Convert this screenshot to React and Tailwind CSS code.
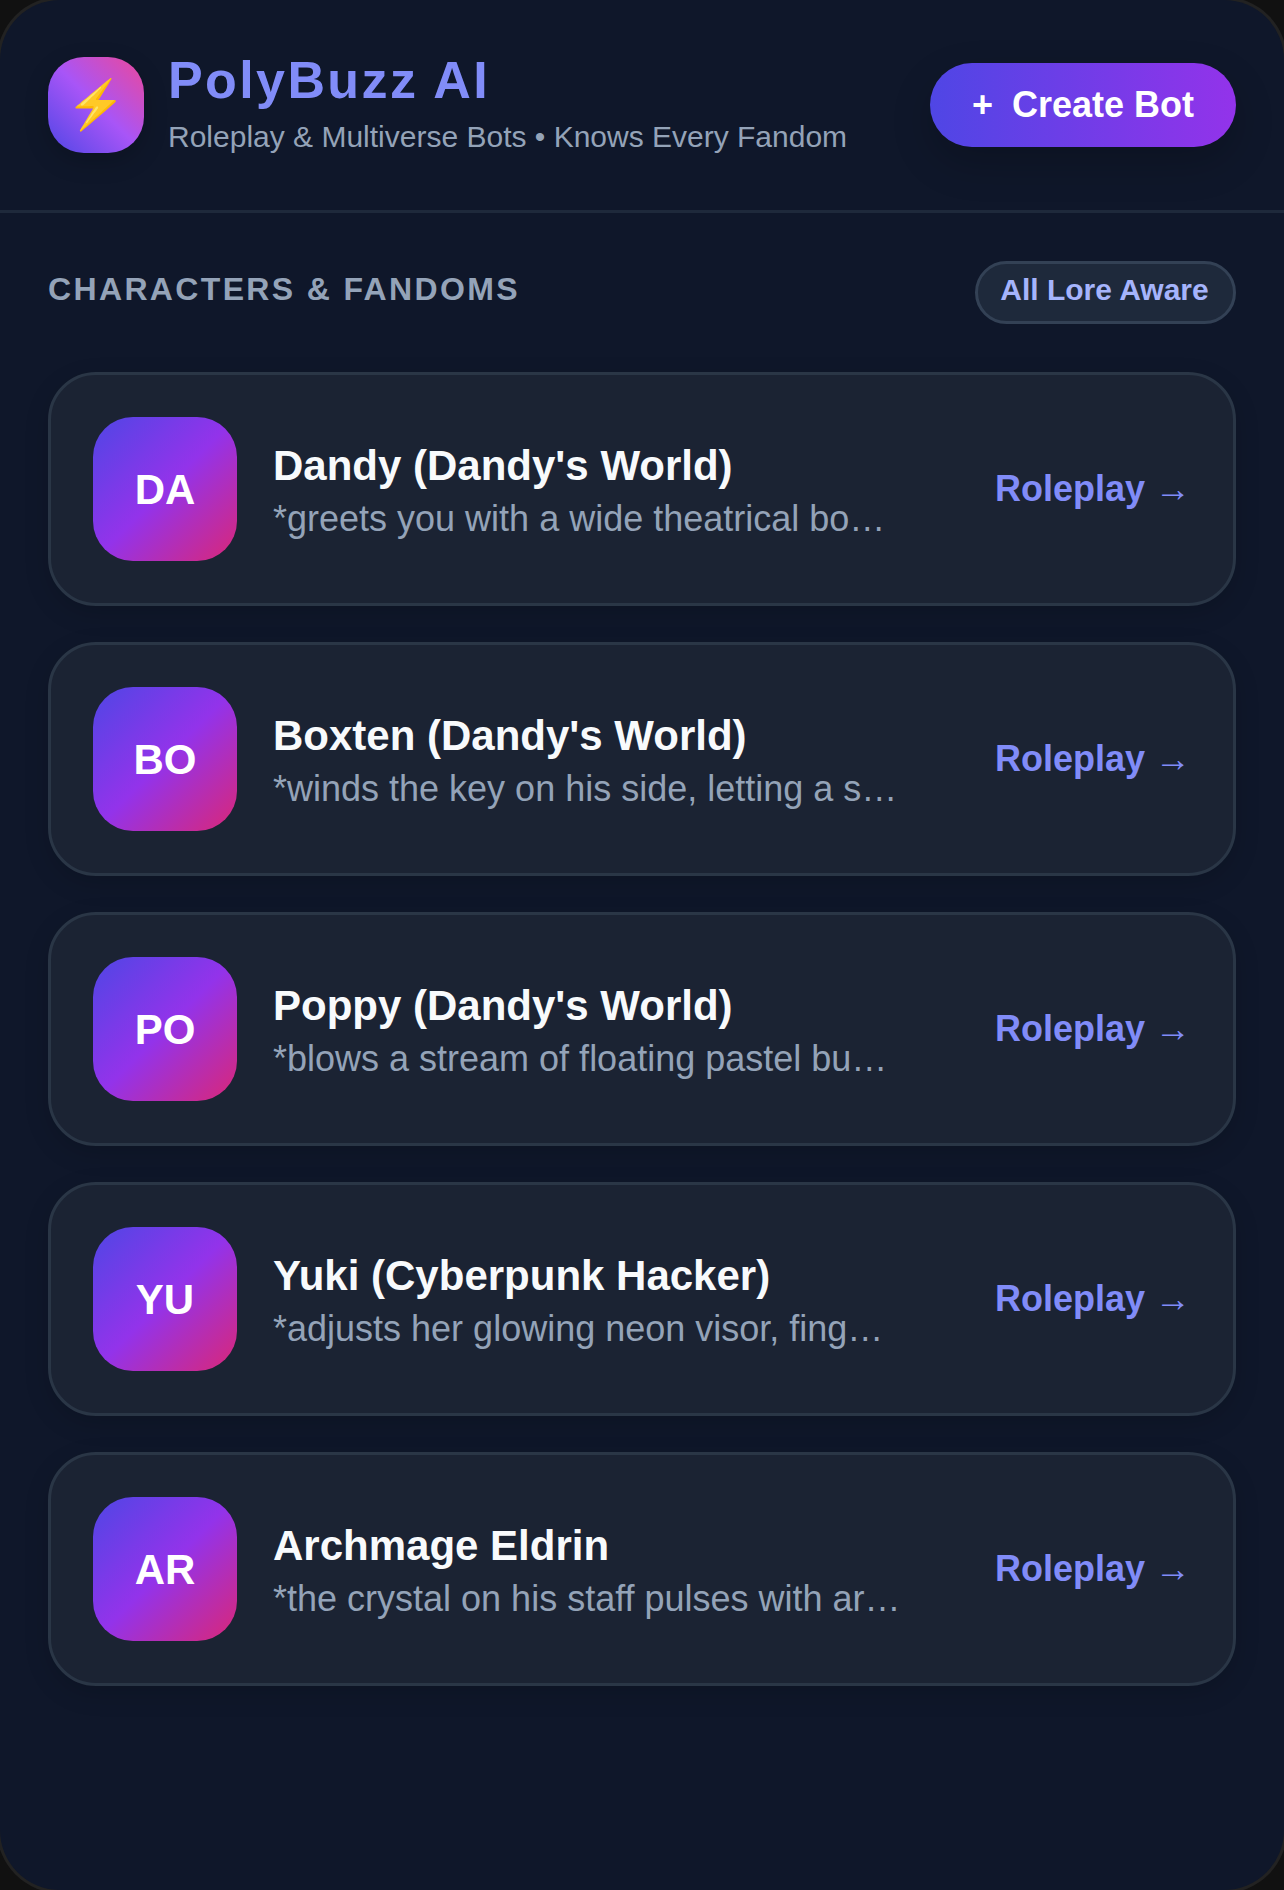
import React from 'react';

const bots = [
  { initials: 'DA', name: "Dandy (Dandy's World)", intro: '*greets you with a wide theatrical bow, petals drifting from his crown*' },
  { initials: 'BO', name: "Boxten (Dandy's World)", intro: '*winds the key on his side, letting a soft melody fill the room*' },
  { initials: 'PO', name: "Poppy (Dandy's World)", intro: '*blows a stream of floating pastel bubbles across the hall*' },
  { initials: 'YU', name: 'Yuki (Cyberpunk Hacker)', intro: '*adjusts her glowing neon visor, fingers dancing over the keys*' },
  { initials: 'AR', name: 'Archmage Eldrin', intro: '*the crystal on his staff pulses with arcane light as you approach*' },
];

function BotCard({ bot }) {
  return (
    <div className="flex items-center gap-[36px] h-[234px] px-[42px] rounded-[48px] border-[3px] border-[#2a3646] bg-[#1b2333] shadow-[0_8px_24px_rgba(0,0,0,0.15)]">
      <div className="flex items-center justify-center shrink-0 w-[144px] h-[144px] rounded-[40px] bg-[linear-gradient(135deg,#4f46e5,#9333ea,#db2777)] text-white font-bold text-[42px]">
        {bot.initials}
      </div>
      <div className="w-[628px] min-w-0 pt-[7px]">
        <div className="text-[42px] leading-[52px] font-bold text-[#f8fafc] truncate">{bot.name}</div>
        <div className="mt-[1px] text-[36px] leading-[52px] text-[#94a3b8] truncate">{bot.intro}</div>
      </div>
      <div className="ml-auto shrink-0 text-[36px] font-bold text-[#818cf8]">Roleplay →</div>
    </div>
  );
}

export default function App() {
  return (
    <div className="w-[1284px] h-[1890px] bg-[#111111] overflow-hidden font-['Liberation_Sans',Arial,sans-serif]">
      <div className="flex flex-col h-full rounded-[60px] bg-[#0f172a] shadow-[0_0_0_3px_#222222]">
        <header className="flex items-center justify-between h-[213px] px-[48px] border-b-[3px] border-[#1e293b] shrink-0">
          <div className="flex items-center gap-[24px]">
            <div className="flex items-center justify-center w-[96px] h-[96px] rounded-[36px] bg-[linear-gradient(45deg,#4f46e5,#a855f7,#ec4899)] text-[48px] shadow-[0_8px_24px_rgba(0,0,0,0.2)]">
              ⚡
            </div>
            <div className="-mt-[4px]">
              <div className="text-[52px] leading-[60px] font-bold tracking-[2.4px] text-[#818cf8]">PolyBuzz AI</div>
              <div className="mt-[7px] text-[30px] leading-[40px] text-[#94a3b8]">Roleplay &amp; Multiverse Bots • Knows Every Fandom</div>
            </div>
          </div>
          <button className="flex items-center justify-center gap-[19px] w-[306px] h-[84px] rounded-full bg-[linear-gradient(90deg,#4f46e5,#9333ea)] text-white text-[36px] font-bold shadow-[0_16px_40px_rgba(0,0,0,0.2)]">
            <span className="text-[36px] leading-none">+</span>
            Create Bot
          </button>
        </header>

        <main className="flex flex-col px-[48px] pt-[48px]">
          <div className="flex items-center justify-between">
            <div className="text-[32px] font-bold tracking-[2.35px] text-[#94a3b8] uppercase -mt-[8px]">Characters &amp; Fandoms</div>
            <div className="flex items-center justify-center w-[261px] h-[63px] pb-[7px] pr-[2px] rounded-full border-[3px] border-[#334155] bg-[#1e293b] text-[30px] font-bold text-[#a5b4fc]">
              All Lore Aware
            </div>
          </div>
          <div className="flex flex-col gap-[36px] mt-[48px]">
            {bots.map((bot) => (
              <BotCard key={bot.initials} bot={bot} />
            ))}
          </div>
        </main>
      </div>
    </div>
  );
}
